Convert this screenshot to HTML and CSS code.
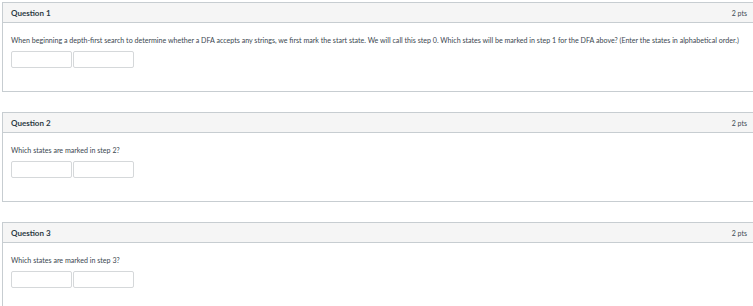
FILE: index.html
```html
<!DOCTYPE html>
<html lang="en">
<head>
    <meta charset="UTF-8">
    <meta name="viewport" content="width=device-width, initial-scale=1.0">
    <title>Quiz</title>
    <link rel="stylesheet" href="styles.css">
</head>
<body>
    <div class="quiz">
        <!-- Question 1 -->
        <div class="question">
            <div class="q-header">
                <span class="q-title">Question 1</span>
                <span class="q-pts">2 pts</span>
            </div>
            <div class="q-body">
                <p>When beginning a depth-first search to determine whether a DFA accepts any strings, we first mark the start state. We will call this step 0. Which states will be marked in step 1 for the DFA above? (Enter the states in alphabetical order.)</p>
                <div class="answers">
                    <input type="text">
                    <input type="text">
                </div>
            </div>
        </div>

        <!-- Question 2 -->
        <div class="question">
            <div class="q-header">
                <span class="q-title">Question 2</span>
                <span class="q-pts">2 pts</span>
            </div>
            <div class="q-body">
                <p>Which states are marked in step 2?</p>
                <div class="answers">
                    <input type="text">
                    <input type="text">
                </div>
            </div>
        </div>

        <!-- Question 3 -->
        <div class="question">
            <div class="q-header">
                <span class="q-title">Question 3</span>
                <span class="q-pts">2 pts</span>
            </div>
            <div class="q-body">
                <p>Which states are marked in step 3?</p>
                <div class="answers">
                    <input type="text">
                    <input type="text">
                </div>
            </div>
        </div>
    </div>
</body>
</html>
```

FILE: styles.css
```css
body { margin: 0; background: #fff; font-family: Lato, "Open Sans", sans-serif; color: #2d3b45; overflow: hidden; }
.quiz { padding: 2px 0 0 2px; }
.question { border: 1px solid #c7cdd1; margin: 0 -2px 20px 0; background: #fff; }
.q-header { display: flex; justify-content: space-between; align-items: center; height: 19px; padding: 0 7px 0 8px; background: #f5f5f5; border-bottom: 1px solid #c7cdd1; }
.q-title { font-weight: bold; font-size: 8px; }
.q-pts { font-size: 7px; color: #3d4a53; }
.q-body { padding: 13px 8px 23px 8px; }
.q-body p { margin: 0 0 6px 0; font-size: 7.1px; line-height: 9px; color: #3b4750; }
.answers { display: flex; gap: 1px; }
.answers input { width: 61px; height: 17px; padding: 0; margin: 0; border: 1px solid #d5d8da; border-radius: 2px; box-sizing: border-box; }
```
